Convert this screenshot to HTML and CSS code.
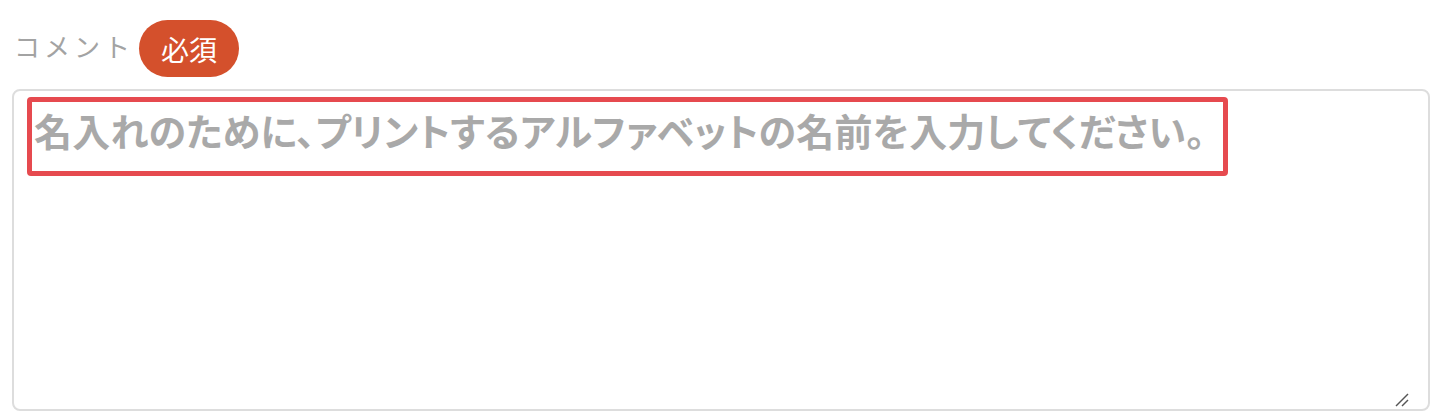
FILE: index.html
```html
<!DOCTYPE html>
<html>
    <head>
        <title>コメント</title>
        <link rel="stylesheet" href="styles.css">
    </head>
    <body>
        <div class="field">
            <div class="fieldLabel">
                <span class="labelText">コメント</span>
                <span class="required">必須</span>
            </div>

            <div class="commentBox">
                <textarea class="comment" placeholder="名入れのために、プリントするアルファベットの名前を入力してください。"></textarea>
                <div class="highlight"></div>
                <svg class="grip" width="16" height="16" viewBox="0 0 16 16">
                    <line x1="2" y1="15" x2="14" y2="3" stroke="#555" stroke-width="1.4"/>
                    <line x1="8" y1="15" x2="14" y2="9" stroke="#555" stroke-width="1.4"/>
                </svg>
            </div>
        </div>
    </body>
</html>
```

FILE: styles.css
```css
body {
    margin: 0;
    background: #ffffff;
    font-family: "Noto Sans CJK JP", "Noto Sans", sans-serif;
}

.field {
    padding: 20px 6px 0 12px;
}

.fieldLabel {
    display: flex;
    align-items: center;
    gap: 5px;
    margin-bottom: 12px;
}

.labelText {
    font-size: 26px;
    color: #a3a3a3;
    letter-spacing: 4px;
    padding-left: 2px;
    margin-top: -6px;
}

.required {
    display: flex;
    align-items: center;
    justify-content: center;
    width: 100px;
    height: 57px;
    border-radius: 29px;
    background: #d4502c;
    color: #ffffff;
    font-size: 28px;
}

.commentBox {
    position: relative;
}

.comment {
    display: block;
    box-sizing: border-box;
    width: 1418px;
    height: 322px;
    margin: 0;
    padding: 16px 20px;
    border: 2px solid #dddddd;
    border-radius: 8px;
    font-family: "Noto Sans CJK JP", "Noto Sans", sans-serif;
    font-size: 38px;
    line-height: 1.2;
    letter-spacing: 0.15px;
    font-feature-settings: "palt";
    resize: none;
    outline: none;
}

.comment::placeholder {
    color: #a9a9a9;
    font-weight: 700;
}

.highlight {
    position: absolute;
    left: 15px;
    top: 8px;
    width: 1201px;
    height: 79px;
    box-sizing: border-box;
    border: 5px solid #e64a4f;
    border-radius: 4px;
    pointer-events: none;
}

.grip {
    position: absolute;
    right: 20px;
    bottom: 4px;
}
```
